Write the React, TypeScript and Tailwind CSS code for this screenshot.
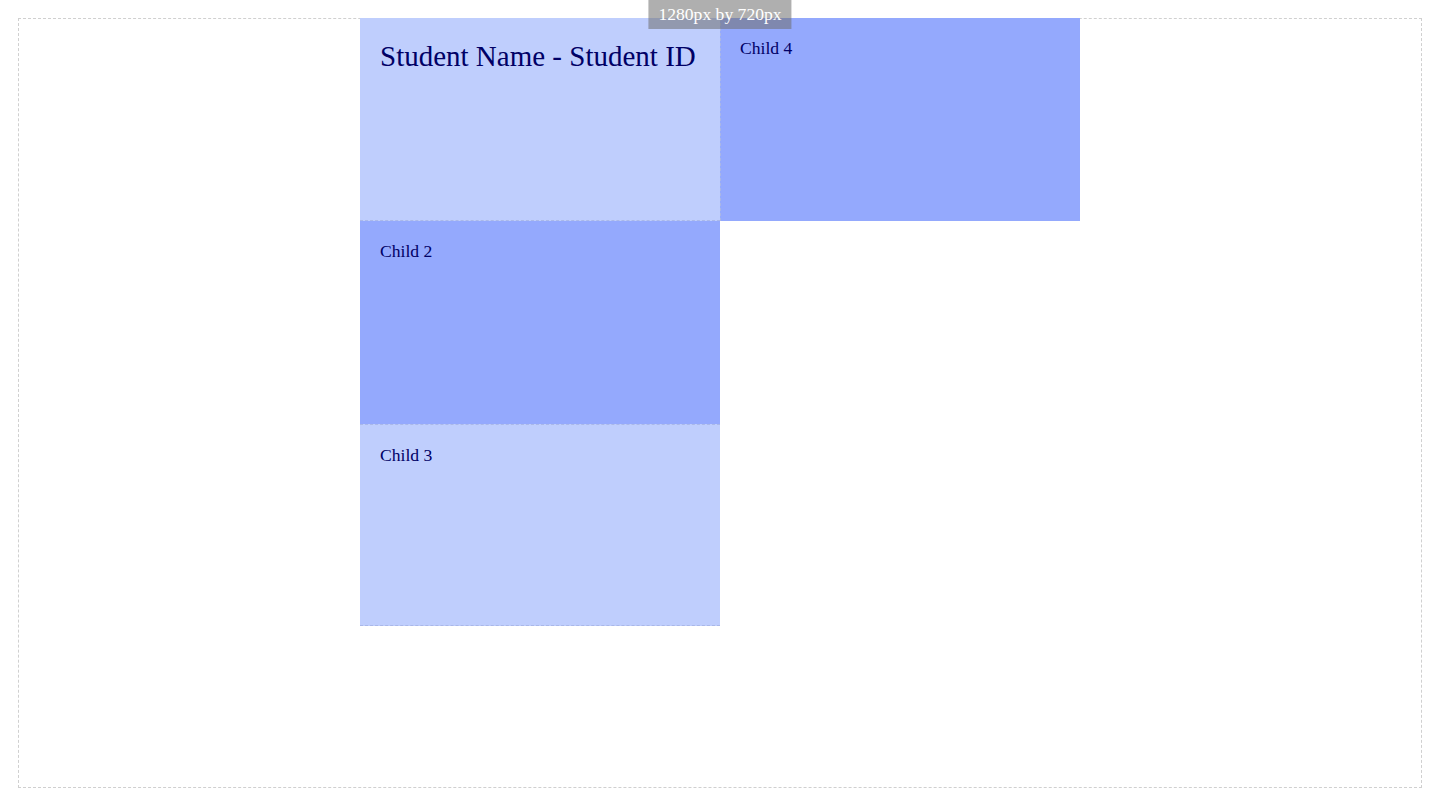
export default function App() {
  return (
    <div className="relative h-[810px] w-[1440px] bg-white px-[18px] pt-[18px] font-['Liberation_Serif',serif] text-[#000066]">
      <div className="absolute left-1/2 top-0 z-10 -translate-x-1/2 bg-[rgba(110,110,110,0.55)] px-[10px] text-[17.6px] leading-[29px] text-white">
        1280px by 720px
      </div>
      <div className="flex h-[770px] justify-center border border-dashed border-[#d0d0d0]">
        <div className="-mt-px grid h-fit w-[720px] grid-cols-2 grid-rows-[203px_203px_202px]">
          <div className="border-b border-dashed border-[#aab8e8] bg-[#bfcefd] p-5 text-[29px] leading-tight">
            Student Name - Student ID
          </div>
          <div className="border-l border-dashed border-[#a9b6e6] bg-[#94a9fd] py-5 pl-[19px] pr-5 text-[17.6px] leading-tight">
            Child 4
          </div>
          <div className="bg-[#94a9fd] p-5 text-[17.6px] leading-tight">Child 2</div>
          <div />
          <div className="border-t border-b border-dashed border-[#aab8e8] bg-[#bfcefd] p-5 text-[17.6px] leading-tight">
            Child 3
          </div>
        </div>
      </div>
    </div>
  );
}
